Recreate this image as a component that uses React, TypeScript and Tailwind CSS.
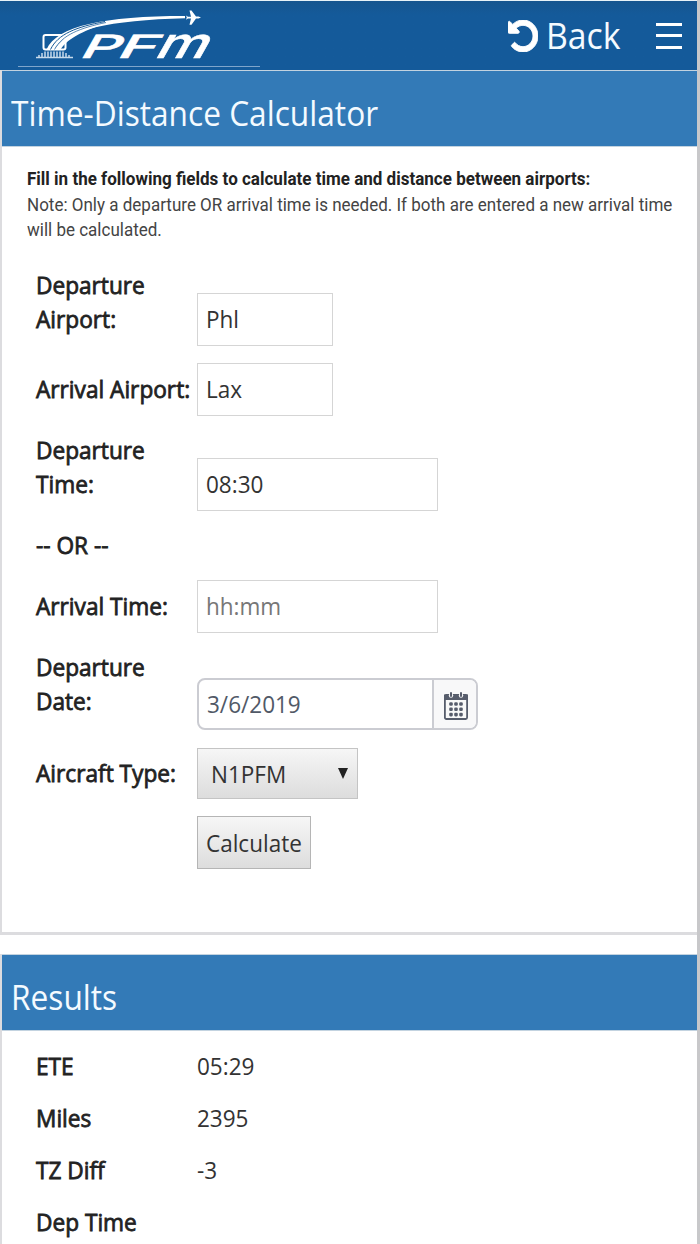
import type { ReactNode } from 'react';

const sans = "font-['Open_Sans','Noto_Sans',sans-serif]";

function Value({ children, className = '' }: { children: ReactNode; className?: string }) {
  return <span className={`inline-block origin-left scale-x-[0.938] whitespace-nowrap ${className}`}>{children}</span>;
}

function Label({ lines }: { lines: string[] }) {
  return (
    <div className="flex w-[161px] shrink-0 flex-col text-[#222]">
      {lines.map((line) => (
        <span
          key={line}
          className="h-[34px] origin-left scale-x-[0.944] whitespace-nowrap leading-[34px] [-webkit-text-stroke:0.8px_#222]"
        >
          {line}
        </span>
      ))}
    </div>
  );
}

function Row({ lines, children, className = 'pb-0' }: { lines: string[]; children?: ReactNode; className?: string }) {
  return (
    <div className={`flex items-end ${className}`}>
      <div className="pb-[10px]">
        <Label lines={lines} />
      </div>
      {children}
    </div>
  );
}

function Field({ children, className }: { children: ReactNode; className: string }) {
  return (
    <div className={`flex h-[53px] items-center border border-[#d5d5d5] bg-white pb-px pl-2 ${className}`}>
      <Value>{children}</Value>
    </div>
  );
}

function PanelTitle({ children }: { children: ReactNode }) {
  return (
    <h2 className="flex h-[77px] items-center border-y border-[#c3d3e0] bg-[#337ab7] pt-[9px] pl-[8.500px] text-[34px] text-[#f4faff]">
      <span className="inline-block origin-left scale-x-[0.931] whitespace-nowrap leading-[44px]">{children}</span>
    </h2>
  );
}

const logoLetters = [
  { glyph: 'P', x: 78, width: 39, size: 'text-[32px]' },
  { glyph: 'F', x: 115, width: 39, size: 'text-[32px]' },
  { glyph: 'm', x: 153, width: 51, size: 'text-[42px]' },
];

function Logo() {
  return (
    <svg className="h-[68px] w-[260px] shrink-0" viewBox="0 0 260 68" fill="none">
      <path d="M18 65.500H260" stroke="#7fa5cb" strokeWidth="1" />
      <rect x="43.500" y="34" width="22" height="14.500" rx="2" stroke="#fff" strokeWidth="2" />
      <path d="M46.500 48.500C57 25 104 15 185 15V17.200C110 19 65 29 54.500 48.500Z" fill="#fff" />
      <path d="M54.500 48.500C65 33 83 26 112 20.500C85 29 69 36 60.500 48.500Z" fill="#fff" />
      <path d="M50.500 48.500C58 33 76 26 105 20.500" stroke="#145896" strokeWidth="1" />
      <path d="M54.500 48.500C62 34 80 27 106 21.500" stroke="#145896" strokeWidth=".7" />
      <path d="M186 14.500l2 1.200h3L189.500 9.500h2l4.500 6h2.500l2.500 1-2.500 1H196l-4.500 6.200h-2L191 17.500h-3l-2 1.300.8-2.200z" fill="#fff" />
      <path d="M36 56.500H73" stroke="#c7daeb" strokeWidth="1.300" />
      <path d="M45 50.500V56M48 50.500V56M51 50.500V56M54 50.500V56M57 50.500V56M60 50.500V56M63 50.500V56M42 52V56M66 52V56M39 54V56M69 54V56" stroke="#c7daeb" strokeWidth="1.500" />
      <g transform="translate(32.300 57) skewX(-29.500) translate(-32.300 0)" fill="#fff" stroke="#fff" strokeWidth=".5">
        {logoLetters.map((l) => (
          <text
            key={l.glyph}
            x={l.x}
            y="0"
            textLength={l.width}
            lengthAdjust="spacingAndGlyphs"
            className={`font-['Inter',sans-serif] font-medium ${l.size}`}
          >
            {l.glyph}
          </text>
        ))}
      </g>
    </svg>
  );
}

function UndoIcon() {
  return (
    <svg className="h-8 w-[30px]" viewBox="0 128 1536 1536" preserveAspectRatio="none" fill="#fff" stroke="#fff" strokeWidth="45">
      <path d="M1536 896q0 156-61 298t-164 245-245 164-298 61q-172 0-327-72.500T177 1387q-7-10-6.500-22.500t8.500-20.500l137-138q10-9 25-9 16 2 23 12 73 95 179 147t225 52q104 0 198.500-40.500T1130 1259t109.500-163.500T1280 897t-40.500-198.500T1130 535 966.500 425.500 768 385q-98 0-188 35.500T420 521l137 138q31 30 14 69-17 40-59 40H64q-26 0-45-19T0 704V256q0-42 40-59 39-17 69 14l130 129q107-101 244.500-156.500T768 128q156 0 298 61t245 164 164 245 61 298z" />
    </svg>
  );
}

function CalendarIcon() {
  const dots = [0, 1, 2].flatMap((r) => [0, 1, 2].map((c) => ({ x: 7 + c * 5, y: 12 + r * 5.3 })));
  return (
    <svg className="h-7 w-6 shrink-0" viewBox="0 0 24 28" fill="none">
      <rect x=".9" y="3" width="22.200" height="24" rx="1.500" fill="#f8f8f8" stroke="#565c6b" strokeWidth="1.800" />
      <path d="M0 2.500h24v5.500H0z" fill="#565c6b" />
      <circle cx="7" cy="3.500" r="2.200" fill="#f5f5f5" />
      <circle cx="17" cy="3.500" r="2.200" fill="#f5f5f5" />
      <path d="M7 1v3M17 1v3" stroke="#565c6b" strokeWidth="2" strokeLinecap="round" />
      {dots.map((d) => (
        <rect key={`${d.x}-${d.y}`} x={d.x - 1.8} y={d.y - 1.8} width="3.600" height="3.600" rx="1.300" fill="#565c6b" />
      ))}
    </svg>
  );
}

const results = [
  ['ETE', '05:29'],
  ['Miles', '2395'],
  ['TZ Diff', '-3'],
  ['Dep Time', ''],
];

export default function App() {
  return (
    <div className={`h-[1244px] w-[700px] overflow-hidden border-r-[3px] border-[#c8c8ca] bg-white text-[24px] text-[#333] ${sans}`}>
      <header className="flex h-[70px] justify-between border-t border-[#e8f2f8] bg-gradient-to-b from-[#16558f] to-[#145a9a] to-20%">
        <Logo />
        <div className="flex items-center pr-[15px] text-[36px] text-[#f4faff]">
          <UndoIcon />
          <span className="ml-2 inline-block w-[110px] origin-left scale-x-[0.938] pt-px leading-[48px]">Back</span>
          <div className="flex h-[26px] w-[26px] flex-col justify-between">
            <div className="h-[3px] bg-white" />
            <div className="h-[3px] bg-white" />
            <div className="h-[3px] bg-white" />
          </div>
        </div>
      </header>

      <section className="h-[865px] border-b-[3px] border-l-2 border-[#dcdcdf]">
        <PanelTitle>Time-Distance Calculator</PanelTitle>
        <div className="pt-5 pl-[25px] font-['Roboto',sans-serif] text-[17.500px] leading-[25.600px] text-[#444]">
          <p className="origin-left scale-x-[0.973] whitespace-nowrap font-bold text-[#222]">
            Fill in the following fields to calculate time and distance between airports:
          </p>
          <p className="origin-left scale-x-[0.972] whitespace-nowrap">
            Note: Only a departure OR arrival time is needed. If both are entered a new arrival time
            <br />
            will be calculated.
          </p>
        </div>

        <form className="flex flex-col pt-[24.300px] pl-[34px]">
          <Row lines={['Departure', 'Airport:']}>
            <Field className="w-[136px]">Phl</Field>
          </Row>
          <Row lines={['Arrival Airport:']} className="mt-[17px]">
            <Field className="w-[136px]">Lax</Field>
          </Row>
          <Row lines={['Departure', 'Time:']} className="mt-[17px]">
            <Field className="w-[241px]">08:30</Field>
          </Row>
          <Row lines={['-- OR --']} className="mt-[17px]" />
          <Row lines={['Arrival Time:']} className="mt-[8px]">
            <Field className="w-[241px] text-[#777]">hh:mm</Field>
          </Row>
          <Row lines={['Departure', 'Date:']} className="mt-[17px]">
            <div className="-mb-[2px] flex h-[52px] w-[281px] overflow-hidden rounded-lg border-2 border-[#cbccd2] text-[#515967]">
              <div className="flex flex-1 items-center pb-px pl-[7.500px]">
                <Value>3/6/2019</Value>
              </div>
              <div className="flex w-[44px] items-center justify-center border-l-2 border-[#cbccd2] bg-[#f8f8f9] pt-[3px] pl-px">
                <CalendarIcon />
              </div>
            </div>
          </Row>
          <Row lines={['Aircraft Type:']} className="mt-[20px]">
            <div className="mb-px flex h-[51px] w-[161px] items-center justify-between border border-[#c4c4c4] bg-gradient-to-b from-[#f6f6f6] to-[#dddddd] pr-[9px] pl-[13px]">
              <Value>N1PFM</Value>
              <svg className="h-[11px] w-[10px]" viewBox="0 0 10 11">
                <path d="M0 0h10L5 11z" fill="#222" />
              </svg>
            </div>
          </Row>
          <div className="mt-4 pl-[161px]">
            <button type="button" className="flex h-[53px] w-[114px] items-center border border-[#b5b5b5] bg-gradient-to-b from-[#f6f6f6] to-[#dddddd] pl-2">
              <Value>Calculate</Value>
            </button>
          </div>
        </form>
      </section>

      <section className="mt-[19px] h-[290px] border-l-2 border-[#dcdcdf]">
        <PanelTitle>Results</PanelTitle>
        <div className="flex flex-col gap-[18px] pt-[18px] pl-[34px]">
          {results.map(([name, value]) => (
            <div key={name} className="flex h-[34px] items-center">
              <Label lines={[name]} />
              <Value>{value}</Value>
            </div>
          ))}
        </div>
      </section>
    </div>
  );
}
